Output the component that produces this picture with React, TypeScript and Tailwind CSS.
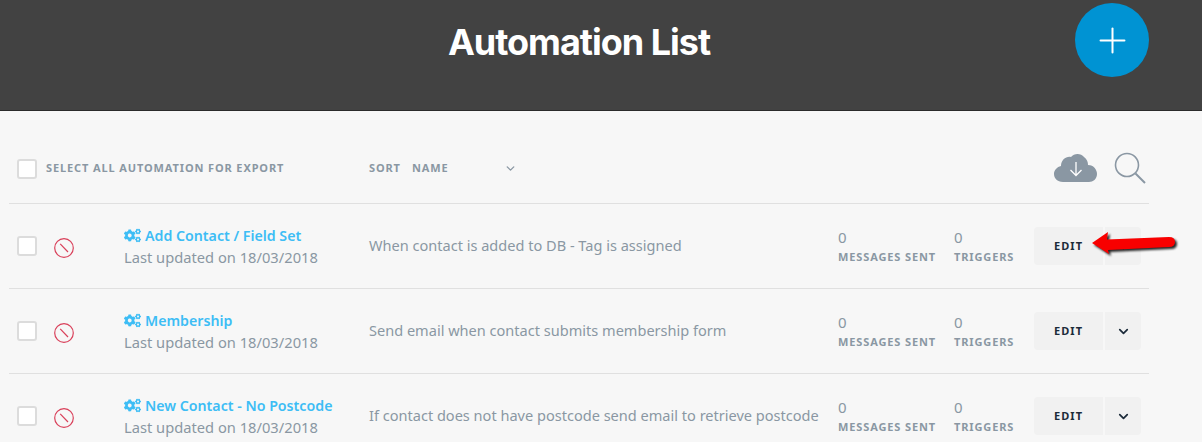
import React from "react";
import { ChevronDown, Plus } from "lucide-react";
import { FaCogs } from "react-icons/fa";

const rows = [
  { name: "Add Contact / Field Set", desc: "When contact is added to DB - Tag is assigned" },
  { name: "Membership", desc: "Send email when contact submits membership form" },
  { name: "New Contact - No Postcode", desc: "If contact does not have postcode send email to retrieve postcode" },
];

const Checkbox = () => (
  <span className="block w-5 h-5 rounded-[3px] border-2 border-[#dcdcdc] bg-white shrink-0" />
);

const Stat = ({ label, className }: { label: string; className: string }) => (
  <div className={className}>
    <div className="text-[15px] leading-[18px] text-[#8a97a3]">0</div>
    <div className="mt-[3px] text-[11px] leading-[16px] font-bold tracking-[0.08em] text-[#8a97a3] whitespace-nowrap">{label}</div>
  </div>
);

const BanIcon = () => (
  <svg className="ml-[17px] mt-[4px] shrink-0" width="20" height="20" viewBox="0 0 20 20" fill="none" stroke="#d9405a" strokeWidth="1.2">
    <circle cx="10" cy="10" r="9.3" />
    <path d="M6.2 5.8 L14 14" />
  </svg>
);

const RedArrow = () => (
  <svg className="absolute left-[1091px] top-[231px] drop-shadow-[2px_2px_1px_rgba(0,0,0,0.85)]" width="88" height="28" viewBox="0 0 88 28">
    <path d="M1 12 L17 1 L16 8.5 L78 6 Q84 6 84 11 Q84 16 78 16 L17 19 L18 23 Z" fill="#f80000" />
  </svg>
);

const App = () => {
  return (
    <div className="relative w-[1202px] h-[442px] overflow-hidden bg-[#f7f7f7] font-['Noto_Sans','Open_Sans',sans-serif]">
      {/* Header */}
      <header className="relative h-[111px] bg-[#424242] border-b border-[#2b2b2b] flex items-start justify-center pr-[44px]">
        <h1 className="mt-[20px] text-[36px] leading-[44px] font-['Inter',sans-serif] font-bold tracking-[-0.028em] text-white">
          Automation List
        </h1>
        <button className="absolute left-[1075px] top-[3px] w-[74px] h-[74px] rounded-full bg-[#0093d3] flex items-center justify-center text-white">
          <Plus size={41} strokeWidth={2} absoluteStrokeWidth />
        </button>
      </header>

      <div className="ml-[9px] w-[1140px]">
        {/* Toolbar */}
        <div className="h-[93px] border-b border-[#e0e0e0] flex items-center pl-[8px] pr-[3px] pt-[23px]">
          <div className="flex items-center w-[352px] gap-[9px]">
            <Checkbox />
            <span className="text-[11px] font-bold tracking-[0.08em] text-[#8a97a3] whitespace-nowrap">SELECT ALL AUTOMATION FOR EXPORT</span>
          </div>
          <span className="text-[11px] font-bold tracking-[0.08em] text-[#8a97a3] w-[43px]">SORT</span>
          <span className="text-[11px] font-bold tracking-[0.08em] text-[#8a97a3] w-[92px]">NAME</span>
          <ChevronDown size={13} strokeWidth={2.5} className="text-[#8a97a3]" />
          <div className="ml-auto flex items-center gap-[16px] -mt-[2px]">
            <svg width="44" height="30" viewBox="0 0 44 30">
              <path d="M9 29 C3 29 0 25 0 21 C0 17 3 14 7 13 C7 7 12 3 17 4 C20 0 27 0 30 4 C33 6 34 9 34 12 C40 12 43 17 43 21 C43 26 39 29 35 29 Z" fill="#8a97a3" />
              <path d="M22 9 V22 M16.5 17 L22 22.5 L27.5 17" fill="none" stroke="#fff" strokeWidth="1.3" />
            </svg>
            <svg width="32" height="32" viewBox="0 0 32 32" fill="none" stroke="#8a97a3">
              <circle cx="13" cy="13" r="11.5" strokeWidth="1.6" />
              <path d="M21.5 21.5 L31 31" strokeWidth="2" />
            </svg>
          </div>
        </div>

        {/* Rows */}
        {rows.map((row) => (
          <div key={row.name} className="h-[85px] border-b border-[#e0e0e0] flex items-center pl-[8px] pr-[8px]">
            <Checkbox />
            <BanIcon />
            <div className="ml-[50px] w-[245px] shrink-0 whitespace-nowrap">
              <div className="flex items-center gap-[4px] text-[14.2px] leading-[20px] font-semibold text-[#3dbdf5]">
                <FaCogs size={17} />
                <span>{row.name}</span>
              </div>
              <div className="text-[14.7px] leading-[20px] text-[#8a97a3] mt-[1px]">Last updated on 18/03/2018</div>
            </div>
            <div className="w-[469px] shrink-0 text-[14.55px] text-[#8a97a3] whitespace-nowrap">{row.desc}</div>
            <Stat label="MESSAGES SENT" className="w-[116px] shrink-0" />
            <Stat label="TRIGGERS" className="w-[80px] shrink-0" />
            <div className="flex gap-[2px] shrink-0">
              <button className="w-[69px] h-[38px] rounded-l-[4px] bg-[#f1f1f1] text-[11px] font-bold tracking-[0.1em] text-[#1c2b3a]">EDIT</button>
              <button className="w-[36px] h-[38px] rounded-r-[4px] bg-[#f1f1f1] flex items-center justify-center text-[#1c2b3a]">
                <ChevronDown size={15} strokeWidth={2.75} />
              </button>
            </div>
          </div>
        ))}
      </div>
      <RedArrow />
    </div>
  );
};

export default App;
